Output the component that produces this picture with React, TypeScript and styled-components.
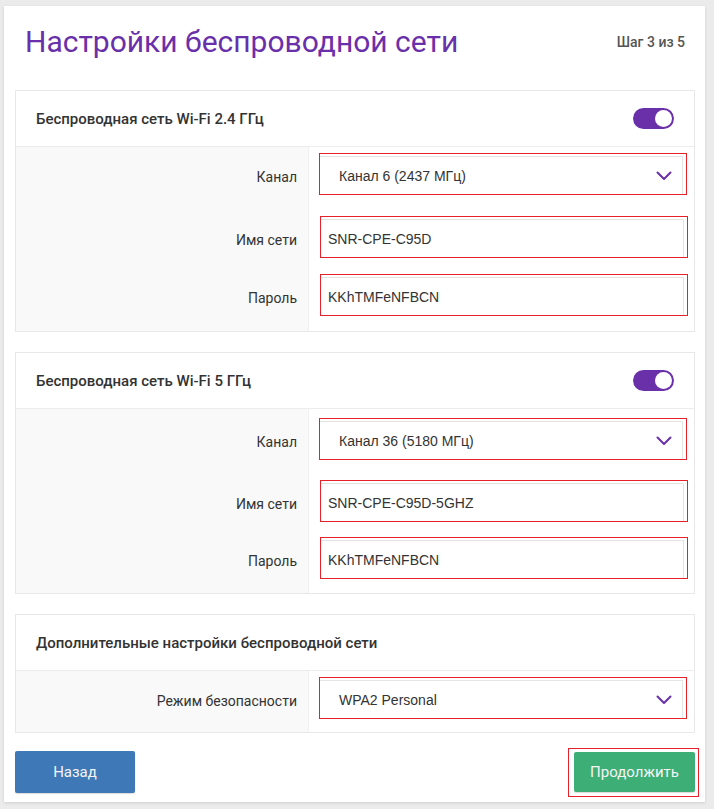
import styled, { createGlobalStyle } from "styled-components";

const GlobalStyle = createGlobalStyle`
  html, body {
    margin: 0;
    padding: 0;
    background: #ebebeb;
  }
  body {
    font-family: Roboto, "Liberation Sans", Arial, sans-serif;
    color: #333;
  }
  * {
    box-sizing: border-box;
  }
`;

const Page = styled.div`
  padding: 6px 9px 8px 4px;
`;

const Card = styled.div`
  width: 701px;
  background: #fff;
  box-shadow: 0 1px 3px rgba(0, 0, 0, 0.12);
  padding: 0 10px 9px 11px;
`;

const Header = styled.div`
  height: 84px;
  padding: 18px 10px 0 10px;
  display: flex;
  justify-content: space-between;
  align-items: flex-start;
`;

const Title = styled.h1`
  margin: 0;
  font-family: Roboto, sans-serif;
  font-weight: 400;
  font-size: 30px;
  line-height: 36px;
  color: #6a30a9;
`;

const Step = styled.div`
  margin-top: 10px;
  font-size: 14px;
  font-weight: 500;
  color: #555;
`;

const Section = styled.section`
  border: 1px solid #e8e8e8;
  margin-bottom: 20px;

  &:last-of-type {
    margin-bottom: 18px;
  }
`;

const SectionHead = styled.div`
  height: 56px;
  padding: 0 20px;
  display: flex;
  align-items: center;
  justify-content: space-between;
  border-bottom: 1px solid #ececec;
  font-size: 15px;
  font-weight: 500;
  color: #333;
`;

const Toggle = styled.div<{ $on: boolean }>`
  width: 41px;
  height: 21px;
  border-radius: 11px;
  background: ${(p) => (p.$on ? "#6a30a9" : "#ccc")};
  position: relative;

  &::after {
    content: "";
    position: absolute;
    top: 2px;
    ${(p) => (p.$on ? "right: 2px;" : "left: 2px;")}
    width: 17px;
    height: 17px;
    border-radius: 50%;
    background: #fff;
  }
`;

const Row = styled.div<{ $pt: number; $pb: number }>`
  display: grid;
  grid-template-columns: 292px 1fr;

  & > div {
    padding-top: ${(p) => p.$pt}px;
    padding-bottom: ${(p) => p.$pb}px;
  }
`;

const LabelCell = styled.div`
  background: #f9f9f9;
  display: flex;
  align-items: center;
  justify-content: flex-end;
  padding-right: 11px;
  font-size: 14px;
  color: #333;
`;

const LabelText = styled.span`
  margin-top: 6px;
`;

const ControlCell = styled.div`
  border-left: 1px solid #f0f0f0;
  padding-left: 10px;
  padding-right: 6px;
`;

const Field = styled.div<{ $select?: boolean }>`
  height: 42px;
  border: 1px solid #e8202a;
  box-shadow: inset -3px 2px 0 #fff, inset -4px 3px 0 #e4e4e4;
  display: flex;
  align-items: center;
  justify-content: space-between;
  padding: 3px 14px 0 ${(p) => (p.$select ? "19px" : "7px")};
  margin-left: ${(p) => (p.$select ? "0" : "1px")};
  margin-right: ${(p) => (p.$select ? "1px" : "0")};
  font-family: "Liberation Sans", Arial, sans-serif;
  font-size: 14px;
  color: #333;
`;

const Chevron = () => (
  <svg width="16" height="10" viewBox="0 0 16 10">
    <path
      d="M1.5 1.5 L8 8 L14.5 1.5"
      fill="none"
      stroke="#6a30a9"
      strokeWidth="2"
      strokeLinecap="round"
      strokeLinejoin="round"
    />
  </svg>
);

const Footer = styled.div`
  display: flex;
  justify-content: space-between;
  align-items: flex-start;
`;

const Button = styled.button<{ $tone: "blue" | "green" }>`
  font-family: Roboto, sans-serif;
  font-size: 15px;
  color: #f4f4f4;
  border: none;
  border-radius: 2px;
  cursor: pointer;
  position: relative;
  width: ${(p) => (p.$tone === "blue" ? "120px" : "121px")};
  height: ${(p) => (p.$tone === "blue" ? "42px" : "40px")};
  margin-top: ${(p) => (p.$tone === "blue" ? "0" : "1px")};
  background: ${(p) => (p.$tone === "blue" ? "#3f78b6" : "#3dae76")};
  box-shadow: 0 1px 1px rgba(0, 0, 0, 0.15);

  ${(p) =>
    p.$tone === "green" &&
    `
    &::after {
      content: "";
      position: absolute;
      left: -6px;
      right: -4px;
      top: -4px;
      bottom: -5px;
      border: 1px solid #e8202a;
    }
  `}
`;

type FieldRow = { label: string; value: string; select?: boolean; pt: number; pb: number };

const Group = ({ title, toggle, rows }: { title: string; toggle?: boolean; rows: FieldRow[] }) => (
  <Section>
    <SectionHead>
      <span>{title}</span>
      {toggle && <Toggle $on />}
    </SectionHead>
    {rows.map((r) => (
      <Row key={r.label} $pt={r.pt} $pb={r.pb}>
        <LabelCell>
          <LabelText>{r.label}</LabelText>
        </LabelCell>
        <ControlCell>
          <Field $select={r.select}>
            <span>{r.value}</span>
            {r.select && <Chevron />}
          </Field>
        </ControlCell>
      </Row>
    ))}
  </Section>
);

export default function App() {
  return (
    <>
      <GlobalStyle />
      <Page>
        <Card>
          <Header>
            <Title>Настройки беспроводной сети</Title>
            <Step>Шаг 3 из 5</Step>
          </Header>
          <Group
            title="Беспроводная сеть Wi-Fi 2.4 ГГц"
            toggle
            rows={[
              { label: "Канал", value: "Канал 6 (2437 МГц)", select: true, pt: 6, pb: 10 },
              { label: "Имя сети", value: "SNR-CPE-C95D", pt: 11, pb: 8 },
              { label: "Пароль", value: "KKhTMFeNFBCN", pt: 8, pb: 15 },
            ]}
          />
          <Group
            title="Беспроводная сеть Wi-Fi 5 ГГц"
            toggle
            rows={[
              { label: "Канал", value: "Канал 36 (5180 МГц)", select: true, pt: 9, pb: 10 },
              { label: "Имя сети", value: "SNR-CPE-C95D-5GHZ", pt: 10, pb: 7 },
              { label: "Пароль", value: "KKhTMFeNFBCN", pt: 8, pb: 14 },
            ]}
          />
          <Group
            title="Дополнительные настройки беспроводной сети"
            rows={[
              { label: "Режим безопасности", value: "WPA2 Personal", select: true, pt: 6, pb: 13 },
            ]}
          />
          <Footer>
            <Button $tone="blue">Назад</Button>
            <Button $tone="green">Продолжить</Button>
          </Footer>
        </Card>
      </Page>
    </>
  );
}
